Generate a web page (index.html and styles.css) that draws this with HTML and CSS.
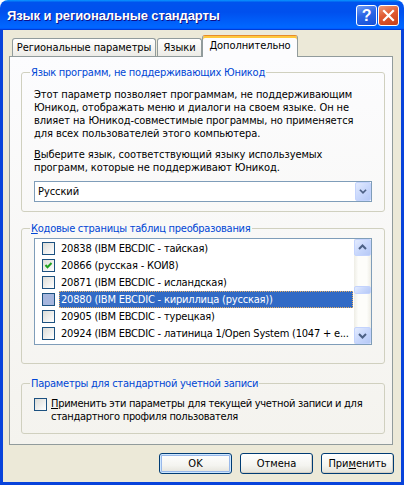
FILE: index.html
```html
<!DOCTYPE html>
<html>
<head>
<meta charset="utf-8">
<link rel="stylesheet" href="styles.css">
</head>
<body>
<div class="window">
  <div class="titlebar">
    <span class="title">Язык и региональные стандарты</span>
    <div class="tbtns">
      <span class="tbtn help">?</span>
      <span class="tbtn close"><svg width="19" height="19" viewBox="0 0 19 19"><path d="M5 5 L14 14 M14 5 L5 14" stroke="#fff" stroke-width="2.2" stroke-linecap="square" fill="none"/></svg></span>
    </div>
  </div>
  <div class="client">
    <div class="tabs">
      <span class="tab t1">Региональные параметры</span>
      <span class="tab t2">Языки</span>
      <span class="tab active">Дополнительно</span>
    </div>
    <div class="panel">
      <fieldset class="group g1">
        <legend>Язык программ, не поддерживающих Юникод</legend>
        <p class="desc">Этот параметр позволяет программам, не поддерживающим<br>Юникод, отображать меню и диалоги на своем языке. Он не<br>влияет на Юникод-совместимые программы, но применяется<br>для всех пользователей этого компьютера.</p>
        <p class="desc desc2"><u>В</u>ыберите язык, соответствующий языку используемых<br>программ, которые не поддерживают Юникод.</p>
        <div class="combo">
          <span class="combo-text">Русский</span>
          <span class="dd-btn"><svg width="16" height="19" viewBox="0 0 16 19"><polyline points="4.5,7.5 8,11 11.5,7.5" stroke="#4D6185" stroke-width="2" fill="none"/></svg></span>
        </div>
      </fieldset>
      <fieldset class="group g2">
        <legend><u>К</u>одовые страницы таблиц преобразования</legend>
        <div class="listbox">
          <div class="items">
            <div class="row"><span class="cb"></span><span class="lbl">20838 (IBM EBCDIC - тайская)</span></div>
            <div class="row"><span class="cb"><svg width="11" height="11" viewBox="0 0 11 11"><polyline points="2.5,5 4.5,7.3 8.5,3" stroke="#21A121" stroke-width="2" fill="none"/></svg></span><span class="lbl">20866 (русская - КОИ8)</span></div>
            <div class="row"><span class="cb"></span><span class="lbl">20871 (IBM EBCDIC - исландская)</span></div>
            <div class="row sel"><span class="cb"></span><span class="lbl">20880 (IBM EBCDIC - кириллица (русская))</span></div>
            <div class="row"><span class="cb"></span><span class="lbl">20905 (IBM EBCDIC - турецкая)</span></div>
            <div class="row"><span class="cb"></span><span class="lbl">20924 (IBM EBCDIC - латиница 1/Open System (1047 + е...</span></div>
          </div>
          <div class="scrollbar">
            <span class="sbtn"><svg width="15" height="15" viewBox="0 0 15 15"><polyline points="4,9 7.5,5.5 11,9" stroke="#4D6185" stroke-width="2" fill="none"/></svg></span>
            <div class="track"><span class="thumb"></span></div>
            <span class="sbtn"><svg width="15" height="15" viewBox="0 0 15 15"><polyline points="4,6 7.5,9.5 11,6" stroke="#4D6185" stroke-width="2" fill="none"/></svg></span>
          </div>
        </div>
      </fieldset>
      <fieldset class="group g3">
        <legend>Параметры для стандартной учетной записи</legend>
        <div class="checkrow">
          <span class="cb"></span>
          <span class="cbtext"><u>П</u>рименить эти параметры для текущей учетной записи и для<br>стандартного профиля пользователя</span>
        </div>
      </fieldset>
    </div>
    <div class="buttons">
      <button class="btn default">OK</button>
      <button class="btn">Отмена</button>
      <button class="btn">При<u>м</u>енить</button>
    </div>
  </div>
</div>
</body>
</html>
```
FILE: styles.css
```css
* { box-sizing: border-box; }
html, body { margin: 0; padding: 0; background: #ffffff; }
body {
  font-family: "DejaVu Sans Condensed", "DejaVu Sans", sans-serif;
  font-stretch: condensed;
  font-size: 11px;
  letter-spacing: -0.08px;
  color: #000;
}
.window {
  width: 404px;
  height: 485px;
  display: flex;
  flex-direction: column;
  border-radius: 8px 8px 0 0;
  overflow: hidden;
}
.titlebar {
  height: 30px;
  flex: none;
  display: flex;
  align-items: center;
  justify-content: space-between;
  padding: 0 5px 0 7px;
  background: linear-gradient(180deg, #0997ff, #0053ee 8%, #0050ee 40%, #0066ff 88%, #0066ff 93%, #005bff 95%, #003dd7 96%, #003dd7);
}
.title {
  font-family: "Liberation Sans", sans-serif;
  font-stretch: normal;
  font-weight: bold;
  font-size: 13px;
  letter-spacing: -0.1px;
  color: #fff;
  text-shadow: 1px 1px #0f1089;
}
.tbtns { display: flex; gap: 1px; }
.tbtn {
  width: 21px;
  height: 21px;
  border: 1px solid #fff;
  border-radius: 3px;
  display: flex;
  align-items: center;
  justify-content: center;
}
.help {
  background: linear-gradient(160deg, #6f9cf6, #2b66e6 45%, #1450d8);
  color: #fff;
  font-family: "Liberation Sans", sans-serif;
  font-stretch: normal;
  font-weight: bold;
  font-size: 16px;
  line-height: 19px;
}
.close {
  background: linear-gradient(160deg, #ee9a78, #e05a32 45%, #c7401a);
}
.client {
  flex: 1;
  background: #ece9d8;
  border: 3px solid #0843db;
  border-top: none;
  display: flex;
  flex-direction: column;
}
.tabs {
  display: flex;
  align-items: flex-end;
  height: 21px;
  margin: 5px 0 0 9px;
}
.tab {
  height: 18px;
  border: 1px solid #919b9c;
  border-bottom: none;
  border-radius: 3px 3px 0 0;
  background: linear-gradient(#ffffff, #ecebe6);
  text-align: center;
  line-height: 16px;
  padding-top: 1px;
  white-space: nowrap;
}
.t1 { width: 144px; margin-right: 1px; }
.t2 { width: 45px; }
.tab.active {
  width: 96px;
  height: 22px;
  margin-bottom: -1px;
  z-index: 1;
  background: #fcfcfe;
  border-top: 1px solid #e68b2c;
  box-shadow: inset 0 2px #ffc83c;
  padding-top: 3px;
  line-height: 13px;
}
.panel {
  height: 389px;
  margin: 0 8px 0 6px;
  border: 1px solid #919b9c;
  background: linear-gradient(#fcfcfe, #f4f3ee);
  padding: 0 7px 0 11px;
}
.group {
  margin: 0;
  border: 1px solid #d0d0bf;
  border-radius: 3px;
  min-width: 0;
}
.group legend {
  color: #0046d5;
  padding: 0 1px;
  margin-left: -4px;
  line-height: 13px;
  letter-spacing: -0.25px;
}
.g1 { margin-top: 9px; padding: 9px 12px 9px 12px; }
.g2 { margin-top: 10px; padding: 3px 12px 18px 12px; }
.g3 { margin-top: 13px; padding: 7px 12px 10px 12px; }
.desc { margin: 0; line-height: 13px; white-space: nowrap; }
.desc2 { margin-top: 8px; }
.combo {
  margin-top: 7px;
  height: 21px;
  border: 1px solid #7f9db9;
  background: #fff;
  display: flex;
  align-items: stretch;
}
.combo-text { flex: 1; padding-left: 3px; line-height: 19px; }
.dd-btn, .sbtn, .thumb {
  border: 1px solid #c3d3fd;
  border-radius: 2px;
  background: linear-gradient(135deg, #e3ebfe 0%, #c9d8fc 50%, #b6c9f6 100%);
}
.dd-btn { width: 16px; display: flex; align-items: center; justify-content: center; }
.listbox {
  height: 107px;
  border: 1px solid #7f9db9;
  background: #fff;
  display: flex;
}
.items { flex: 1; padding-top: 1px; min-width: 0; }
.row { display: flex; align-items: center; height: 17px; }
.cb {
  width: 13px;
  height: 13px;
  flex: none;
  border: 1px solid #1c5180;
  background: linear-gradient(135deg, #dcdcd7, #ffffff);
  display: flex;
  align-items: center;
  justify-content: center;
}
.row .cb { margin-left: 7px; }
.lbl {
  flex: 1;
  margin: 0 1px 0 4px;
  padding-left: 2px;
  line-height: 17px;
  height: 17px;
  white-space: nowrap;
  overflow: hidden;
  letter-spacing: -0.2px;
}
.row.sel .lbl {
  background: #316ac5;
  color: #fff;
  border: 1px dotted #e8b063;
  padding-left: 1px;
  line-height: 15px;
}
.row.sel .cb { background: #a6b6dd; }
.scrollbar {
  width: 17px;
  flex: none;
  display: flex;
  flex-direction: column;
  background: linear-gradient(to right, #eeede5, #fdfdfa 25%, #fdfdfa 75%, #eeede5);
}
.sbtn {
  height: 17px;
  flex: none;
  display: flex;
  align-items: center;
  justify-content: center;
}
.track { flex: 1; display: flex; flex-direction: column; }
.thumb { display: block; height: 8px; margin-top: 30px; }
.checkrow { display: flex; align-items: flex-start; gap: 4px; }
.checkrow .cb { margin-top: 1px; }
.cbtext { line-height: 13px; white-space: nowrap; letter-spacing: -0.3px; }
.buttons {
  display: flex;
  justify-content: flex-end;
  gap: 8px;
  padding-right: 7px;
  margin-top: 8px;
}
.btn {
  width: 73px;
  height: 21px;
  border: 1px solid #003c74;
  border-radius: 3px;
  background: linear-gradient(#ffffff, #f4f4f0 60%, #e3e2d9);
  font: inherit;
  font-stretch: condensed;
  color: #000;
  padding: 0;
  box-shadow: inset -1px -1px 0 #d6d0c5;
}
.btn.default {
  box-shadow: inset 0 0 0 1px #cee7ff, inset 0 0 0 2px #98b8ea;
}
```
